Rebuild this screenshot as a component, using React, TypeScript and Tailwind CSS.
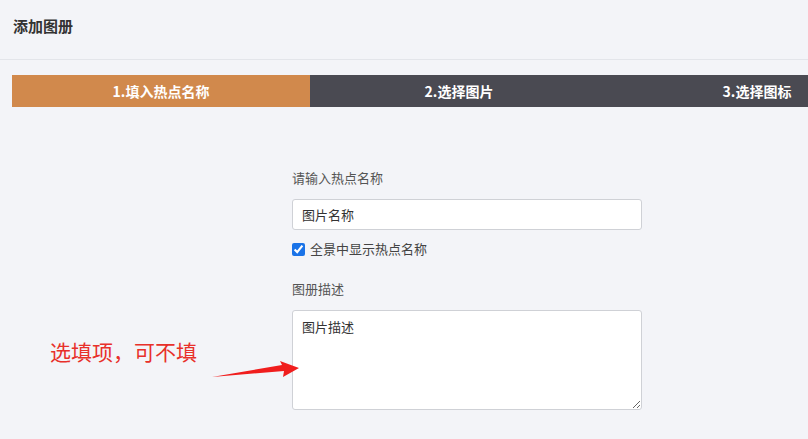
export default function App() {
  const font = { fontFamily: '"Microsoft YaHei", "Noto Sans CJK SC", sans-serif' }

  return (
    <div className="h-[439px] w-[808px] overflow-hidden bg-[#f3f4f8] text-[#333]" style={font}>
      <div className="h-[60px] border-b border-[#e3e5ea] px-[13px] pt-[16px]">
        <h1 className="text-[15px] font-bold leading-[20px] text-[#333]">添加图册</h1>
      </div>

      <div className="ml-[12px] mt-[15px] flex h-[32px] w-[894px] text-[14px] font-bold text-white">
        <div className="flex w-[298px] items-center justify-center bg-[#d1894c]">1.填入热点名称</div>
        <div className="flex w-[298px] items-center justify-center bg-[#4a4a52]">2.选择图片</div>
        <div className="flex w-[298px] items-center justify-center bg-[#4a4a52]">3.选择图标</div>
      </div>

      <div className="relative flex">
        <div className="ml-[292px] mt-[62px] flex w-[350px] flex-col">
          <label className="text-[13px] leading-[18px] text-[#555]">请输入热点名称</label>
          <input
            defaultValue="图片名称"
            className="mt-[12px] h-[31px] rounded-[3px] border border-[#cfd1d6] bg-white px-[9px] text-[13px] text-[#333] outline-none"
            style={font}
          />
          <label className="mt-[10px] flex items-center gap-[5px] text-[13px] leading-[18px] text-[#444]">
            <input type="checkbox" defaultChecked className="m-0 h-[13px] w-[13px] accent-[#1a73e8]" />
            全景中显示热点名称
          </label>
          <label className="mt-[22px] text-[13px] leading-[18px] text-[#555]">图册描述</label>
          <textarea
            defaultValue="图片描述"
            className="mt-[12px] h-[100px] resize-y rounded-[3px] border border-[#cfd1d6] bg-white px-[9px] py-[6px] text-[13px] text-[#333] outline-none"
            style={font}
          />
        </div>

        <div className="absolute left-[50px] top-[230px] text-[21px] leading-[28px] text-[#e8302a]">选填项，可不填</div>
        <svg className="absolute left-[200px] top-[240px]" width="110" height="40" viewBox="200 340 110 40">
          <path d="M212 370 L282 358 L280 354 L299 361 L283 370 L284 364 Z" fill="#f01d1d" />
        </svg>
      </div>
    </div>
  )
}
